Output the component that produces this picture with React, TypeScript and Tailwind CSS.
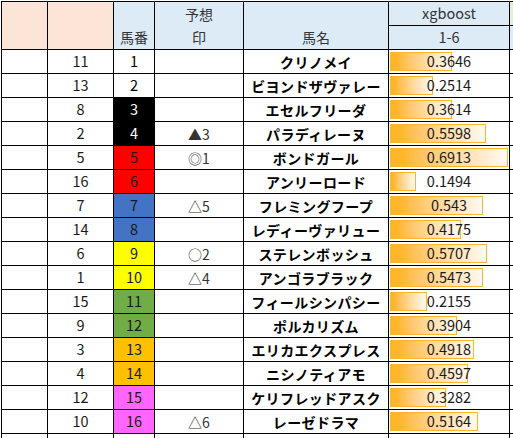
import React from "react";

type Row = {
  ninki: number;
  ban: number;
  mark: string;
  name: string;
  score: number;
};

const rows: Row[] = [
  { ninki: 11, ban: 1, mark: "", name: "クリノメイ", score: 0.3646 },
  { ninki: 13, ban: 2, mark: "", name: "ビヨンドザヴァレー", score: 0.2514 },
  { ninki: 8, ban: 3, mark: "", name: "エセルフリーダ", score: 0.3614 },
  { ninki: 2, ban: 4, mark: "▲3", name: "パラディレーヌ", score: 0.5598 },
  { ninki: 5, ban: 5, mark: "◎1", name: "ボンドガール", score: 0.6913 },
  { ninki: 16, ban: 6, mark: "", name: "アンリーロード", score: 0.1494 },
  { ninki: 7, ban: 7, mark: "△5", name: "フレミングフープ", score: 0.543 },
  { ninki: 14, ban: 8, mark: "", name: "レディーヴァリュー", score: 0.4175 },
  { ninki: 6, ban: 9, mark: "○2", name: "ステレンボッシュ", score: 0.5707 },
  { ninki: 1, ban: 10, mark: "△4", name: "アンゴラブラック", score: 0.5473 },
  { ninki: 15, ban: 11, mark: "", name: "フィールシンパシー", score: 0.2155 },
  { ninki: 9, ban: 12, mark: "", name: "ポルカリズム", score: 0.3904 },
  { ninki: 3, ban: 13, mark: "", name: "エリカエクスプレス", score: 0.4918 },
  { ninki: 4, ban: 14, mark: "", name: "ニシノティアモ", score: 0.4597 },
  { ninki: 12, ban: 15, mark: "", name: "ケリフレッドアスク", score: 0.3282 },
  { ninki: 10, ban: 16, mark: "△6", name: "レーゼドラマ", score: 0.5164 },
];

// 枠色 (wakuban colours)
const waku: Record<number, string> = {
  1: "bg-white text-black",
  2: "bg-black text-white",
  3: "bg-[#ff0000] text-[#1a1a1a]",
  4: "bg-[#4472c4] text-[#1a1a1a]",
  5: "bg-[#ffff00] text-[#1a1a1a]",
  6: "bg-[#70ad47] text-[#1a1a1a]",
  7: "bg-[#ffc000] text-[#1a1a1a]",
  8: "bg-[#ff66ff] text-[#1a1a1a]",
};

const maxScore = 0.6913;

export default function App() {
  return (
    <div className="w-[513px] h-[438px] overflow-hidden bg-white pl-px pt-px font-['Noto_Sans_CJK_JP',sans-serif] text-[14px] leading-none">
      <div className="grid w-max gap-px bg-black p-px grid-cols-[45px_65px_40px_88px_144px_120px_40px] auto-rows-[23px]">
        {/* header */}
        <div className="row-span-2 bg-[#fce4d6]" />
        <div className="row-span-2 bg-[#fce4d6]" />
        <div className="row-span-2 bg-[#ddebf7] flex items-end justify-center pb-[5px] text-[#333]">
          馬番
        </div>
        <div className="row-span-2 bg-[#ddebf7] flex flex-col items-center justify-between pt-[5px] pb-[5px] text-[#333]">
          <span>予想</span>
          <span>印</span>
        </div>
        <div className="row-span-2 bg-[#ddebf7] flex items-end justify-center pb-[5px] text-[#333]">
          馬名
        </div>
        <div className="bg-[#ddebf7] flex items-center justify-center text-[#333] text-[14.5px]">
          xgboost
        </div>
        <div className="bg-[#e2efda]" />
        <div className="bg-[#ddebf7] flex items-center justify-center text-[#333] text-[14.5px]">
          1-6
        </div>
        <div className="bg-[#ddebf7]" />

        {/* data rows */}
        {rows.map((r) => (
          <React.Fragment key={r.ban}>
            <div className="bg-white" />
            <div className="bg-white flex items-center justify-center text-[#1a1a1a] text-[14.5px]">
              {r.ninki}
            </div>
            <div
              className={`flex items-center justify-center text-[14.5px] ${waku[Math.ceil(r.ban / 2)]}`}
            >
              {r.ban}
            </div>
            <div className="bg-white flex items-center justify-center text-[#333]">
              {r.mark}
            </div>
            <div className="bg-white flex items-center justify-center font-bold text-black tracking-[0.4px]">
              {r.name}
            </div>
            <div className="relative bg-white flex items-center justify-center text-[#1a1a1a] text-[14.5px]">
              <div
                className="absolute left-px top-[2px] h-[19px] border border-[#ffb628] bg-linear-to-r from-[#ffb628] from-10% to-[#fffaf2]"
                style={{ width: `${(r.score / maxScore) * 118}px` }}
              />
              <span className="relative">{r.score}</span>
            </div>
            <div className="bg-white" />
          </React.Fragment>
        ))}

        {/* partial next row */}
        <div className="bg-white" />
        <div className="bg-white" />
        <div className="bg-white" />
        <div className="bg-white" />
        <div className="bg-white" />
        <div className="bg-white" />
        <div className="bg-white" />
      </div>
    </div>
  );
}
